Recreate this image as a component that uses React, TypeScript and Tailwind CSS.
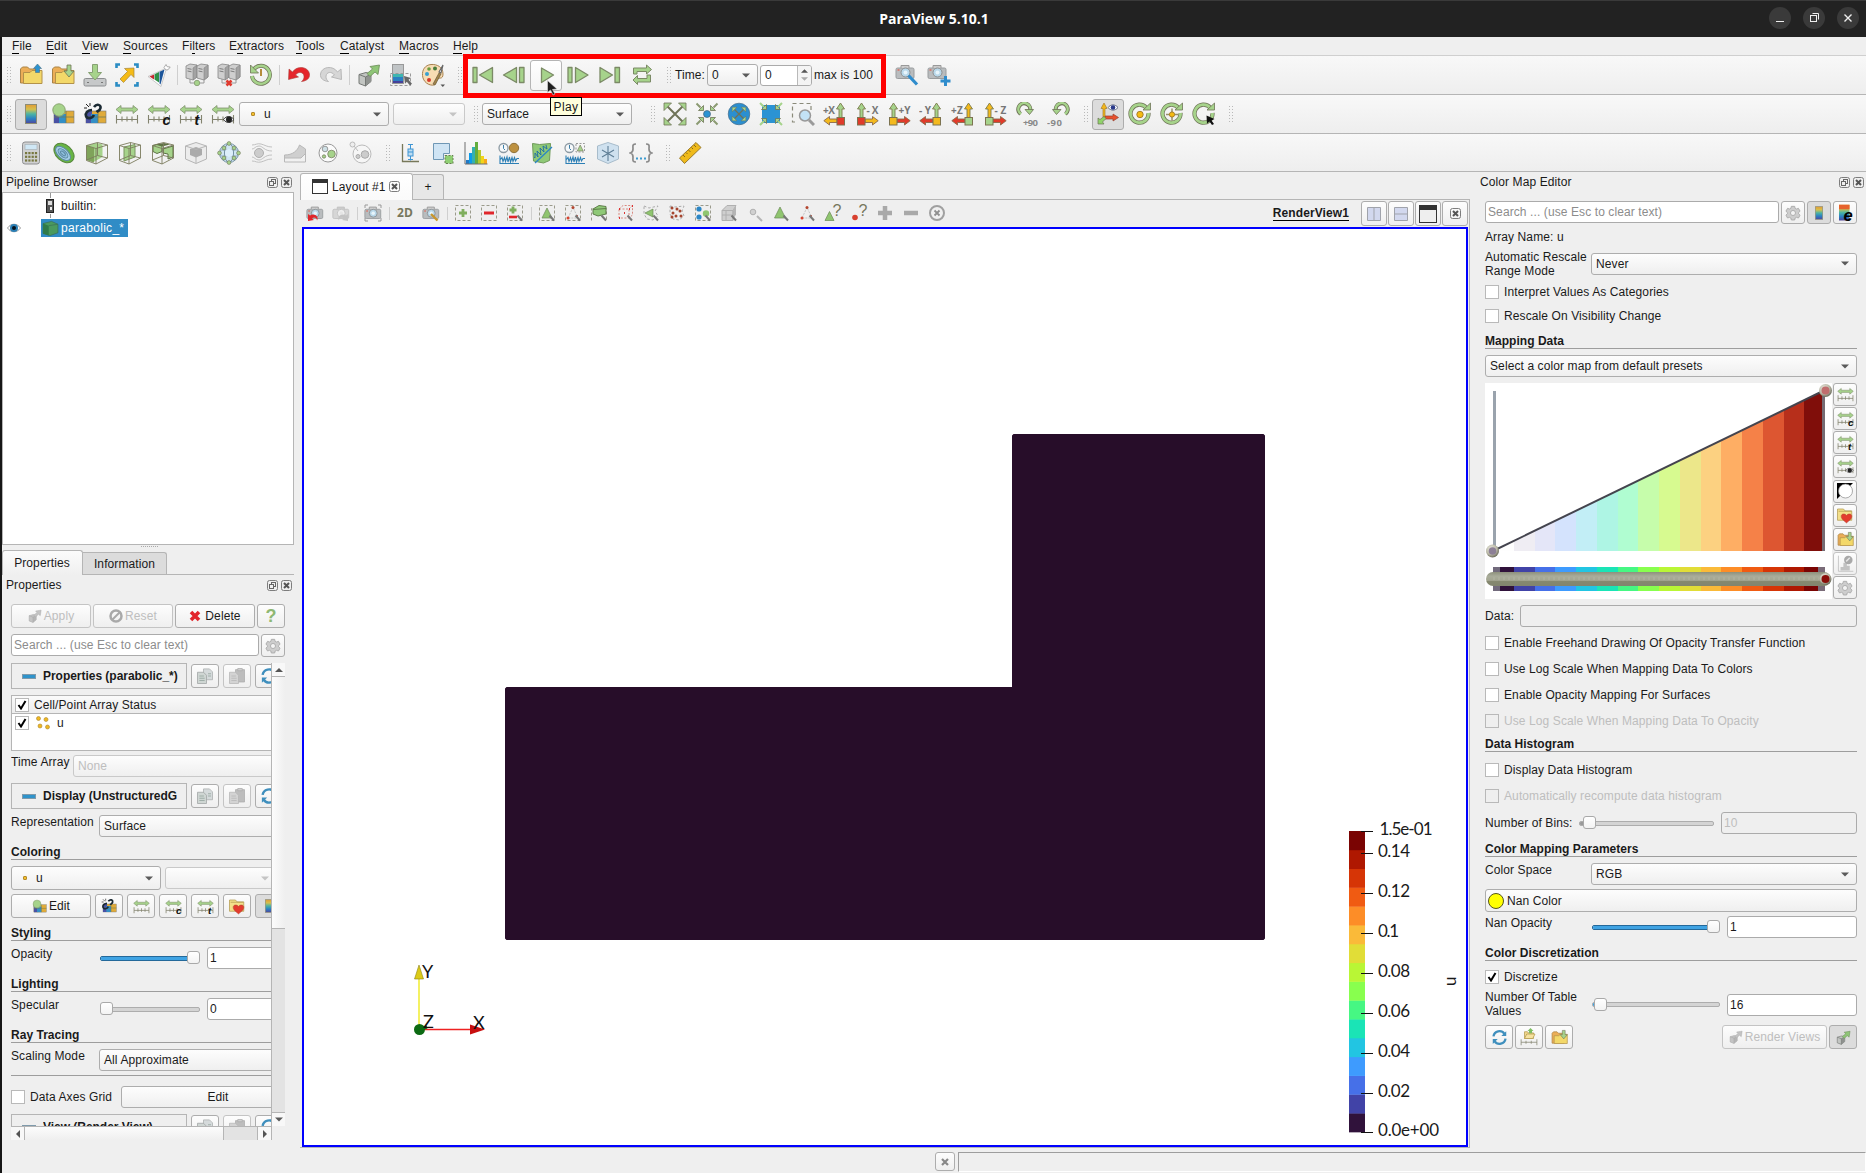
import React from "react";

type Kids = { children?: React.ReactNode };

const G = "#a6d38b";
const GS = "#6f7357";
const TURBO = ["#30123b", "#4143a7", "#4670e8", "#3e9bfe", "#22c5e2", "#1ae4b6", "#46f783", "#88ff4e", "#b9f635", "#e1dd37", "#faba39", "#fd8d27", "#f05b12", "#d63506", "#af1801", "#7a0403"];

/* ---------- icon primitives ---------- */
const Ic = ({ s = 24, children }: Kids & { s?: number }) => (
  <svg width={s} height={s} viewBox="0 0 24 24" fill="none" className="shrink-0">{children}</svg>
);
const Sm = ({ children }: Kids) => (
  <svg width={18} height={18} viewBox="0 0 18 18" fill="none" className="shrink-0">{children}</svg>
);

const FolderBody = () => (
  <>
    <path d="M1.500 20V6l2-2h5l2 2h8v14z" fill="#ecae57" stroke="#a98346" />
    <path d="M4.500 20.500v-11h6.500l2-2h10v13z" fill="#f3d869" stroke="#b3924a" />
  </>
);
const FolderUp = () => (<Ic><FolderBody /><path d="M18.500 1l4 4.500h-2v4h-4v-4h-2z" fill="#2b93cf" stroke="#4b6f85" strokeWidth=".6" /></Ic>);
const FolderDown = ({ s = 24 }: { s?: number }) => (<Ic s={s}><FolderBody /><path d="M16 2h4v6h3l-5 6-5-6h3z" fill={G} stroke={GS} strokeWidth=".8" /></Ic>);
const SaveData = () => (
  <Ic>
    <rect x="1" y="15.500" width="22" height="7.500" rx="1.500" fill="#c6c8c9" stroke="#8b8d8f" />
    <path d="M9.500 1.500h5v8h4L12 17 5.500 9.500h4z" fill={G} stroke="#86a173" />
    <path d="M4 19.500h2M18 19.500h2" stroke="#777" />
  </Ic>
);
const SaveShot = () => (
  <Ic>
    <path d="M1.500 5V1.500H5M19 1.500h3.500V5M22.500 19v3.500H19M5 22.500H1.500V19" stroke="#2a8cc4" strokeWidth="2.600" />
    <path d="M19 5v9.500l-3-3-7.500 8-3.500-3.500 7.500-7.500-3-3z" fill="#f5bb16" stroke="#a5853a" strokeWidth=".7" />
  </Ic>
);
const CatalystLogo = () => (
  <Ic>
    <path d="M1 13.500L19.500 5 14 23.500z" fill="#fff" stroke="#b5b5b5" strokeWidth=".7" />
    <path d="M2.500 13.500l4.500-2v5z" fill="#c42630" /><path d="M7.500 11.200l4.500-2.200v10.500l-4.500-3z" fill="#2d8f47" /><path d="M12.500 8.800l5-2.300-4 15-1-1z" fill="#1c559a" />
    <path d="M17 4.500l2-3 1.200 2.200 3 .3-2.200 2.800-2 .200z" fill="#fff" stroke="#999" strokeWidth=".8" />
  </Ic>
);
const Tower = ({ x }: { x: number }) => (
  <g transform={`translate(${x} 0)`}>
    <path d="M0 3l4-2 7 1v12l-4 3-7-2z" fill="#cfcfcf" stroke="#858585" strokeWidth=".8" />
    <path d="M7 5l4-3v12l-4 3z" fill="#a3a3a3" stroke="#858585" strokeWidth=".6" />
    <path d="M1.500 5.500l4 .800M1.500 8l4 .800" stroke="#7e7e7e" />
  </g>
);
const Servers = ({ off }: { off?: boolean }) => (
  <Ic>
    <Tower x={1} /><Tower x={12} />
    <path d="M5 16v4h14v-4" stroke="#999" />
    {off ? <path d="M9.500 17.500l5 5M14.500 17.500l-5 5" stroke="#e03a2f" strokeWidth="2.600" /> : <circle cx="12" cy="20" r="2.700" fill={G} stroke="#8fa77c" />}
  </Ic>
);
const History = () => (
  <Ic>
    <path d="M5 6a9 9 0 1 1-2 7" stroke={GS} strokeWidth="4" /><path d="M5 6a9 9 0 1 1-2 7" stroke={G} strokeWidth="2.600" />
    <path d="M1.500 2v8h8z" fill={G} stroke={GS} strokeWidth=".8" /><path d="M12 6v7" stroke="#b58c3c" strokeWidth="2" />
  </Ic>
);
const Undo = () => (<Ic><path d="M2 6l-.500 10.500 10-2.500-3-2c3-4 8-3 8.500 1 .300 3-1 4-2.500 5.500 5-.500 8.500-3 8-7.500C21.500 3.500 10 2 5.500 9z" fill="#e5252b" stroke="#a8433e" strokeWidth=".6" /></Ic>);
const Redo = () => (<Ic><path d="M22 6l.500 10.500-10-2.500 3-2c-3-4-8-3-8.500 1-.300 3 1 4 2.500 5.500-5-.500-8.500-3-8-7.500C2.500 3.500 14 2 18.500 9z" fill="#d6d6d6" stroke="#b8b8b8" /></Ic>);
const ApplyIcon = ({ s = 24, gray }: { s?: number; gray?: boolean }) => (
  <Ic s={s}>
    <path d="M2 11.500l7-2 5 1.500v7.500l-5.500 4.500L2 20.500z" fill={gray ? "#c4c4c4" : "#c2c5c2"} stroke={gray ? "#aaa" : "#757875"} />
    <path d="M8.500 14l5.500-3v7.500L8.500 23z" fill={gray ? "#b5b5b5" : "#8f928f"} /><path d="M2 11.500l6.500 2.500 5.500-3M8.500 14v9" stroke={gray ? "#aaa" : "#757875"} />
    <path d="M13 3.500l9.500-1.500-1.500 9.500-3-2.500-5 4.500-3-3 5.500-4.500z" fill={gray ? "#c4c4c4" : "#8fc577"} stroke={gray ? "#aaa" : "#6b8a58"} strokeWidth=".8" />
  </Ic>
);
const Rainbow = ({ id }: { id: string }) => (
  <defs><linearGradient id={id} x1="0" y1="0" x2="0" y2="1"><stop offset="0" stopColor="#e29b35" /><stop offset=".25" stopColor="#d6c04c" /><stop offset=".5" stopColor="#4bb4a4" /><stop offset=".75" stopColor="#2a7fc4" /><stop offset="1" stopColor="#51469b" /></linearGradient></defs>
);
const ColorBarIcon = ({ s = 24 }: { s?: number }) => (<Ic s={s}><Rainbow id="cb" /><rect x="6.500" y="2.500" width="11" height="19" fill="url(#cb)" stroke="#8d8d75" /></Ic>);
const ColorBarE = () => (<Ic s={18}><rect x="4" y="1" width="14" height="21" fill="url(#cb)" /><rect x="4" y="1" width="14" height="6" fill="#e7632c" /><text x="10" y="22.500" fontSize="22" fontWeight="700" fontStyle="italic" fontFamily="Liberation Sans, sans-serif" fill="#000">e</text></Ic>);
const SelLut = () => (
  <Ic>
    <rect x="3.500" y="1.500" width="11" height="19" fill="#c0c4c6" stroke="#999" /><path d="M4 11h10v9H4z" fill="#2b7fc2" /><path d="M4 11h10v3H4z" fill="#3fb6b0" /><path d="M4 18h10v2H4z" fill="#45409a" />
    <path d="M1.500 10.500h20v12h-20z" stroke="#999" strokeDasharray="3 2" /><path d="M15 13l7 2-2.500 1.800 3.500 4-2 1.700-3.200-3.800-1.800 2z" fill="#666" />
  </Ic>
);
const Palette = () => (
  <Ic>
    <path d="M10 1.500C4 2 1 7 1.500 12.500 2 19 8 23 13 22c3-1 1-4 3-6s6 1 6-5C22 4 16 1 10 1.500z" fill="#f7dcb4" stroke="#a8824f" />
    <circle cx="8" cy="6" r="1.800" fill="#6c9c3d" /><circle cx="14" cy="5.500" r="2" fill="#4a7d3b" /><circle cx="6" cy="11" r="2" fill="#39a0cf" /><circle cx="8" cy="17" r="2" fill="#d43a2c" />
    <path d="M22 2l-2 8-2-1z" fill="#fff" stroke="#666" strokeWidth="1.200" /><path d="M18 10l2 1-6 11-2-1z" fill="#a3854c" stroke="#6a5a3a" strokeWidth=".7" />
    <path d="M19.500 21.500h4.500l-2.200 2.500z" fill="#555" />
  </Ic>
);
/* playback */
const vst = { fill: G, stroke: "#7b8a66", strokeWidth: 1.300, strokeLinejoin: "round" as const };
const First = () => (<Ic><path d="M3 4.500h4v15H3zM22.500 4.500v15L9.500 12z" {...vst} /></Ic>);
const Prev = () => (<Ic><path d="M14.500 4.500v15L1.500 12zM17.500 4.500h4.500v15h-4.500z" {...vst} /></Ic>);
const Play = () => (<Ic><path d="M7.500 5v14.500L19.500 12z" {...vst} /></Ic>);
const Next = () => (<Ic><path d="M2 4.500h4v15H2zM9.500 4.500v15L22 12z" {...vst} /></Ic>);
const Last = () => (<Ic><path d="M2 4.500v15L14.500 12zM17 4.500h4.500v15H17z" {...vst} /></Ic>);
const Loop = () => (<Ic><path d="M3.500 11V5h13V2l5 4.500-5 4.500V8.500H7V11zM20.500 12v7h-13v2.500l-4.500-4.500 4.500-4.500V15.500H17V12z" {...vst} strokeWidth={1} /></Ic>);
/* range */
const Range = ({ s = 24, t }: { s?: number; t?: string }) => (
  <Ic s={s}>
    <path d="M1 7.500l5-4v2.500h12V3.500l5 4-5 4V9H6v2.500z" fill={G} stroke="#82936e" strokeWidth=".8" />
    <path d="M1.500 13v8.500M1.500 17.500h21M22.500 13v8.500M7 14.500v5M12 14.500v5M17 14.500v5" stroke="#83836f" strokeWidth="1.100" />
    {t === "eye" ? (<><path d="M12.500 17.500c3-4 7-4 10.500 0-3.500 4-7.500 4-10.500 0z" fill="#eee" stroke="#333" /><circle cx="18" cy="17.500" r="3" fill="#222" /></>) : t ? (
      <text x="15.500" y="22.500" fontSize="14" fontWeight="700" fontStyle="italic" fontFamily="Liberation Sans, sans-serif" fill="#111">{t}</text>) : null}
  </Ic>
);
const LutBlob = () => (<><rect x="3" y="9" width="20" height="12" fill="#e0ab3a" stroke="#777" strokeWidth=".6" /><path d="M3 9h6v12H3z" fill="#4a51a4" /><path d="M8 12h7v9H8z" fill="#338fc6" /><path d="M15 9v12M3 15h20" stroke="#6f7a55" strokeWidth=".8" /></>);
const EditMap = ({ s = 24 }: { s?: number }) => (<Ic s={s}><LutBlob /><circle cx="8" cy="8" r="6.200" fill={G} stroke="#8aa571" /></Ic>);
const SepMap = ({ s = 24 }: { s?: number }) => (<Ic s={s}><LutBlob /><path d="M11 5c3-4 7-2 6.500 1s-3 3-4 4M9 8c-4 0-7 3-6 6s6 3 8-1" stroke="#1b2a33" strokeWidth="2.600" /><path d="M3 2l3 3M7 1v3M1 6h3" stroke="#222" /></Ic>);
/* camera */
const InArrows = () => (<g fill={G} stroke={GS} strokeWidth=".8"><path d="M8.500 8.500V3.500L3.500 8.500zM15.500 8.500V3.500l5 5zM8.500 15.500v5l-5-5zM15.500 15.500v5l5-5z" /><path d="M1.500 1.500l4 4M22.500 1.500l-4 4M1.500 22.500l4-4M22.500 22.500l-4-4" stroke="#8b9a72" strokeWidth="2" /></g>);
const OutArrows = ({ k = 1 }: { k?: number }) => (<g transform={`translate(12 12) scale(${k}) translate(-12 -12)`}><path d="M4 4l16 16M20 4L4 20" stroke={GS} strokeWidth="2" /><path d="M1 1h7.500L1 8.500zM23 1v7.500L15.500 1zM1 23v-7.500L8.500 23zM23 23h-7.500l7.500-7.500z" fill={G} stroke={GS} strokeWidth=".8" /></g>);
const ResetCam = () => <Ic><OutArrows /></Ic>;
const ZoomData = () => <Ic><InArrows /><circle cx="12" cy="12" r="3.500" fill="#2b93d3" stroke="#456" strokeWidth=".6" /></Ic>;
const ResetClosest = () => <Ic><circle cx="12" cy="12" r="10.800" fill="#2b8fd0" stroke="#4c6f88" strokeWidth=".7" /><OutArrows k={0.62} /></Ic>;
const ZoomClosest = () => <Ic><rect x="3" y="3" width="18" height="18" fill="#2b93d3" /><g fill={G} stroke={GS} strokeWidth=".8"><path d="M7.500 7.500V2.500L2.500 7.500zM16.500 7.500v-5l5 5zM7.500 16.500v5l-5-5zM16.500 16.500v5l5-5z" /><path d="M1 1l4 4M23 1l-4 4M1 23l4-4M23 23l-4-4" stroke={G} strokeWidth="2" /></g></Ic>;
const ZoomBox = () => <Ic><path d="M20 8V1.500H1.500V20H6" stroke="#8a8a7a" strokeDasharray="4 3" strokeWidth="1.200" /><path d="M18 18l5 5" stroke="#9a9a9a" strokeWidth="3" /><circle cx="14" cy="13.500" r="5.500" fill="#c3e2f5" stroke="#999" strokeWidth="1.500" /></Ic>;
const AxisIc = ({ t, flip, up, side, box }: { t: string; flip?: boolean; up: string; side: string; box: string }) => (
  <Ic>
    <g transform={flip ? "translate(24 0) scale(-1 1)" : undefined}>
      <path d="M16 16V7h-2.500l4-6 4 6H19v9z" fill={up} stroke="#7c7a4c" strokeWidth=".9" />
      <path d="M14 17H6.500V14.500L.800 18.700 6.500 23v-2.500H14z" fill={side} stroke="#8a6a4c" strokeWidth=".9" />
      <rect x="14" y="15.500" width="7.500" height="7.500" fill={box} stroke="#7c7350" />
    </g>
    <text x={flip ? 11.500 : 0} y="12" fontSize="10" fontWeight="700" fontFamily="Open Sans, sans-serif" fill="#777" textLength="12">{t}</text>
  </Ic>
);
const Rot = ({ t, flip }: { t: string; flip?: boolean }) => (
  <Ic><g transform={flip ? "translate(24 0) scale(-1 1)" : undefined}><path d="M5.500 12a6 6 0 1 1 9.500-3" stroke={GS} strokeWidth="4" /><path d="M6 12a6 6 0 1 1 9-3" stroke={G} strokeWidth="2.400" /><path d="M10 7.500h8.500l-4 5z" fill={G} stroke={GS} strokeWidth=".8" /></g>
    <text x={flip ? 0 : 8} y="23.500" fontSize="9.500" fontWeight="700" fontFamily="Open Sans, sans-serif" fill="#8a8a8a" textLength="15">{t}</text></Ic>
);
const AxesVis = () => <Ic><path d="M7 15V6.500H5L8 1l3 5.500H9V15z" fill="#f3b71a" stroke="#a8802c" strokeWidth=".7" /><path d="M9 14h8v-2l5.500 3.500-5.500 3.500v-2H9z" fill="#e8502c" stroke="#96402f" strokeWidth=".7" /><path d="M8 14.500l2 2-3.500 3.500 1.500 2H2v-6l2 1.500z" fill="#8fd36a" stroke={GS} strokeWidth=".7" /><path d="M12 5.500c3-3.500 7-3.500 10 0-3 3.500-7 3.500-10 0z" fill="#fff" stroke="#666f86" /><circle cx="17" cy="5.500" r="2.300" fill="#2b3a8a" /></Ic>;
const Center = ({ k }: { k: number }) => <Ic><path d="M18.500 6a9 9 0 1 0 2 5" stroke={GS} strokeWidth="4.200" /><path d="M18.500 6a9 9 0 1 0 2 5" stroke={G} strokeWidth="2.800" /><path d="M15 8h7.500V1z" fill={G} stroke={GS} strokeWidth=".8" />{k === 0 && <circle cx="12" cy="12.500" r="3.200" fill="#f6bb12" stroke="#a8802c" />}{k === 1 && <><path d="M12 6.500v12M6 12.500h12" stroke="#97906a" strokeWidth="1.500" /><circle cx="12" cy="12.500" r="2.600" fill="#f6bb12" stroke="#a8802c" /></>}{k === 2 && <path d="M14.500 13.500l8 3.500-3 1.500L22 22l-2 1-2.500-3.500L15 21.500z" fill="#111" />}</Ic>;
/* filters */
const Calc = () => <Ic><rect x="3.500" y="1" width="17" height="22" rx="2.500" fill="#cfd0d1" stroke="#8f9092" /><rect x="6" y="3.500" width="12" height="5" fill="#cfe7f5" stroke="#a8b3b8" strokeWidth=".7" />{[0, 1, 2].map(r => [0, 1, 2, 3].map(c => <rect key={`${r}${c}`} x={6 + c * 3.300} y={11 + r * 3.700} width="2.200" height="2.200" fill="#77773f" />))}</Ic>;
const Contour = () => <Ic><ellipse cx="12" cy="12" rx="11.500" ry="8" transform="rotate(42 12 12)" fill="#68b545" stroke="#57873d" /><ellipse cx="11.500" cy="13" rx="9" ry="5" transform="rotate(42 12 12)" fill="#a6cfe8" stroke="#5d8aa3" /><ellipse cx="11.500" cy="13" rx="6" ry="3" transform="rotate(42 12 12)" stroke="#5d8aa3" fill="#8fbfdd" /><ellipse cx="11.500" cy="13" rx="3" ry="1.400" transform="rotate(42 12 12)" stroke="#5d8aa3" /></Ic>;
const Frame = ({ c = "#7c7c5e" }: { c?: string }) => <path d="M1.500 4.500l11-3 10 2.500v13l-11.500 6-9.500-3.500zM1.500 4.500l9.500 3 11.500-3.500M11 7.500V23M12.500 1.500v13l-11 4.500M12.500 14.500l10 2.500" stroke={c} strokeWidth=".9" />;
const Clip = () => <Ic><path d="M1.500 4.500l10-2.500 6 1.500v12.500L8.500 21l-7-2z" fill={G} /><path d="M1.500 4.500L9 7v14.500l-7.500-2.500z" fill="#7fa35a" /><Frame /></Ic>;
const Slice = () => <Ic><path d="M6 6l11-2.500V16L6 20z" fill={G} stroke="#7b9660" /><Frame /></Ic>;
const Thresh = () => <Ic><path d="M2 4.500l6-1.500 3 1.500v6l-5 2-4-2zM12 8l10-3v11l-5 2v-5l-5-1z" fill={G} stroke="#5d7345" /><path d="M4 3.500l7 2 8-2-6-1.500z" fill="#5f7345" /><Frame /></Ic>;
const Extract = () => <Ic><path d="M1.500 5l10.500-3.500L22.500 5v13L12 22.500 1.500 18z" fill="#ececec" stroke="#b5b5b5" /><path d="M6 8l6-2 6 2v6l-6 2.500L6 14z" fill="#ababab" /><path d="M1.500 5L12 8.500l10.500-3.500M12 16v6" stroke="#b5b5b5" /></Ic>;
const Glyph = () => <Ic><circle cx="12" cy="12" r="9.500" fill="#cfe5f3" stroke="#7b98a8" /><ellipse cx="12" cy="12" rx="4.500" ry="9.500" stroke="#6f8d9d" /><path d="M3 9h18M3 15h18" stroke="#7d9db0" strokeWidth=".8" /><circle cx="12" cy="12" r="4" fill="#dceefa" />{[[12, 2.500], [12, 21.500], [2.500, 12], [21.500, 12], [7, 7], [17, 7], [7, 17], [17, 17]].map(([x, y]) => <circle key={`${x}-${y}`} cx={x} cy={y} r="1.900" fill={G} stroke={GS} strokeWidth=".6" />)}</Ic>;
const Stream = () => <Ic><circle cx="9" cy="12" r="4.500" fill="#ccc" stroke="#b0b0b0" /><path d="M2 4c4 0 5-2 9-1s6 3 11 3M2 20c4 0 5 2 9 1s6-3 11-3M2 8c3 0 3-3 7-3s5 5 13 5M2 16c3 0 3 3 7 3s5-5 13-5" stroke="#bbb" strokeWidth=".9" /></Ic>;
const Warp = () => <Ic><path d="M1.500 14c8 0 13-4 15-10l6 4v4.500L18 17H1.500z" fill="#cfcfcf" stroke="#b8b8b8" /><path d="M1.500 14v7h21V12" stroke="#b8b8b8" /></Ic>;
const Group = () => <Ic><circle cx="12" cy="12" r="9" fill="#fbfbfb" stroke="#999" /><circle cx="9" cy="8" r="2.800" fill="#cfe0e5" stroke="#777" strokeWidth=".7" /><circle cx="15.500" cy="13" r="3.800" fill={G} stroke={GS} strokeWidth=".7" /><circle cx="8" cy="15.500" r="1.700" fill={G} stroke={GS} strokeWidth=".7" /></Ic>;
const ExGroup = () => <Ic><circle cx="13" cy="13" r="9" fill="#f6f6f6" stroke="#bbb" /><circle cx="16" cy="13.500" r="3.800" fill="#ccc" stroke="#aaa" /><circle cx="9" cy="15.500" r="2" fill="#ccc" stroke="#aaa" /><circle cx="3.500" cy="3.500" r="2.500" fill="#eee" stroke="#bbb" /><path d="M5 5l4 5" stroke="#bbb" /></Ic>;
const BoxPlot = () => <Ic><path d="M4.500 3v17.500H21" stroke="#77785a" strokeWidth="1.300" /><path d="M12.500 3.500v16M10 3.500h5M10 18.500h5" stroke="#3f95d3" /><rect x="10" y="8" width="5" height="7" fill="#bcdcf2" stroke="#3f95d3" /><path d="M10 11h5" stroke="#3f95d3" /></Ic>;
const ExSel = () => <Ic><path d="M2.500 2.500h16v10h-6v6h-10z" fill="#cfe4f4" stroke="#6f97b5" /><rect x="14" y="14.500" width="8" height="8" fill="#8fcf73" stroke="#667c50" strokeDasharray="2 1.500" /></Ic>;
const Histo = () => <Ic>{["#2479c4", "#0b9bea", "#35b0b0", "#63ad3d", "#b5c92f", "#f3d419", "#f7a81c"].map((c, i) => <rect key={c} x={2 + i * 3} y={[19, 12, 6, 1, 9, 15, 18][i]} width="3" height={23 - [19, 12, 6, 1, 9, 15, 18][i]} fill={c} />)}<path d="M1 1v22h22.500" stroke="#6f6f6f" /></Ic>;
const Wave = () => <path d="M3 14.500v8h19M3.500 18.500l1.500-2 1 4 1.500-4 1 4 1.500-4.500 1 5 1.500-5 1 5 1.500-4.500 1 4 1.500-4 1 3.500 1.500-2.500h2" stroke="#2c7fb5" strokeWidth="1.100" />;
const TimeA = ({ k }: { k?: boolean }) => <Ic><circle cx="6.500" cy="7" r="4.500" fill="#f5f8fa" stroke="#8d9aa3" strokeWidth="1.300" /><path d="M6.500 4v3.500L8 9" stroke="#3d7fa8" />{k ? <><rect x="13" y="2.500" width="8.500" height="8.500" stroke="#999" strokeDasharray="2 1.500" /><path d="M17.200 4l3 6h-6z" fill={G} stroke={GS} strokeWidth=".6" /></> : <circle cx="17" cy="7" r="4.700" fill="#bd9140" stroke="#8f7139" />}<Wave /></Ic>;
const OverLine = () => <Ic><path d="M2.500 2.500l7 1 11-1-1 17-6 2.500-10-2z" fill="#8fc977" stroke="#6f9a5a" /><path d="M5 22L22 6" stroke="#2b86c5" strokeWidth="1.300" /><path d="M4 16l1 1 0-5 3 4-1-6 4 4-1-7 4 4-1-6 4 3-1-4" stroke="#1f6ca6" strokeWidth=".9" /></Ic>;
const Probe = () => <Ic><path d="M1.500 5L12 1.500 22.500 5v13L12 22.500 1.500 18z" fill="#cfe1ef" stroke="#a8bccb" /><path d="M12 5v15M6 9l12 7M18 9L6 16" stroke="#5e7e96" strokeWidth="1.100" /></Ic>;
const Prog = () => <Ic><path d="M7 3c-4 0-3 2-3 5 0 2-1 3.500-2.500 4C3 12.500 4 14 4 16c0 3-1 5 3 5M17 3c4 0 3 2 3 5 0 2 1 3.500 2.500 4-1.500.500-2.500 2-2.500 4 0 3 1 5-3 5" stroke="#8b8b8b" strokeWidth="1.700" /><path d="M7 17.500h2M11 17.500h2M15 17.500h2" stroke="#3d9bd0" strokeWidth="2.200" /></Ic>;
const Ruler = () => <Ic><path d="M1.500 17L18 1.500l5 5L6.500 22.500z" fill="#efba1b" stroke="#9a7a2c" /><path d="M5 14l2 2M8 11.500l1.500 1.500M10.500 9l2 2M13.500 6.500L15 8M16 4l2 2" stroke="#8a6a1c" /></Ic>;
const Camera = ({ gray }: { gray?: boolean }) => (<><rect x="1" y="5" width="18" height="10.500" rx="1.500" fill={gray ? "#d6d6d6" : "#b9bcbe"} stroke={gray ? "#c0c0c0" : "#999c9e"} /><path d="M6 5V2.500h8V5" fill="#ccc" stroke={gray ? "#c0c0c0" : "#999"} /><circle cx="10.500" cy="9.500" r="4.500" fill={gray ? "#eee" : "#b9d8ea"} stroke={gray ? "#c0c0c0" : "#8c8f91"} /><circle cx="10.500" cy="9.500" r="2" fill={gray ? "#e5e5e5" : "#e7f4fb"} />{!gray && <path d="M2.500 7h2" stroke="#e25a4a" strokeWidth="1.200" />}</>);
const CamWrench = () => <Ic><Camera /><path d="M13.500 12.500l8.500 9" stroke="#2f8ccc" strokeWidth="3.200" /></Ic>;
const CamPlus = () => <Ic><Camera /><path d="M18.500 13v10M13.500 18h10" stroke="#2f8ccc" strokeWidth="3" /></Ic>;

/* small glyphs */
const Gear = ({ s = 16 }: { s?: number }) => <Ic s={s}><path d="M9.500 2h5l.700 3 2 1 3-1 2.400 4.300-2.300 2.200v1.500l2.300 2.200-2.400 4.300-3-1-2 1-.700 3h-5l-.700-3-2-1-3 1-2.400-4.300L3.700 13v-1.500L1.400 9.300 3.800 5l3 1 2-1z" fill="#cdcdcd" stroke="#a8a8a8" strokeWidth="1.300" /><circle cx="12" cy="12" r="3.800" fill="#f3f3f3" stroke="#a8a8a8" strokeWidth="1.300" /></Ic>;
const Refresh = ({ s = 18 }: { s?: number }) => <Ic s={s}><path d="M3.500 10.500a8.500 8.500 0 0 1 15.500-3.500M20.500 13.500a8.500 8.500 0 0 1-15.500 3.500" stroke="#3f8fbd" strokeWidth="3.200" /><path d="M21.500 3v7h-7zM2.500 21v-7h7z" fill="#3f8fbd" /></Ic>;
const Copy = ({ k }: { k?: boolean }) => <Ic s={18}>{k ? <><path d="M10 3.500h12V20H10z" fill="#bdbdbd" stroke="#acacac" /><path d="M13 2h6v3h-6z" fill="#cfcfcf" stroke="#acacac" /></> : <path d="M10 2.500h8l4 4V17H10z" fill="#d5dadb" stroke="#a9adad" />}<path d="M2 7h8l4 4v11H2z" fill={k ? "#d3d3d3" : "#cfd6d3"} stroke={k ? "#b5b5b5" : "#9fa3a3"} /><path d="M4.500 12h6M4.500 15h7M4.500 18h7" stroke={k ? "#b5b5b5" : "#8fa09a"} />{!k && <path d="M16 9h4M16 12h4" stroke="#8fa09a" />}</Ic>;
const Heart = () => <Ic s={18}><path d="M2 19V4h8l2 2.500h9V19z" fill="#f4e08a" stroke="#b39b52" /><path d="M3.500 7h17" stroke="#b39b52" /><path d="M14 22.500c-5-4-7.500-6-7-9.500.500-3 5-3 7-.500 2-2.500 6.500-2.500 7 .500.500 3.500-2 5.500-7 9.500z" fill="#e33b2e" stroke="#b0452f" strokeWidth=".7" /></Ic>;
const FloatX = () => (
  <span className="flex gap-[3px]">
    <svg width="11" height="11" viewBox="0 0 11 11" fill="none"><rect x=".5" y=".5" width="10" height="10" rx="2" stroke="#7d7d7d" /><rect x="4.500" y="2.500" width="4" height="4" stroke="#666" /><rect x="2.500" y="4.500" width="4" height="4" fill="#efefef" stroke="#666" /></svg>
    <XBox />
  </span>
);
const XBox = () => <svg width="11" height="11" viewBox="0 0 11 11" fill="none" className="shrink-0"><rect x=".5" y=".5" width="10" height="10" rx="2" stroke="#7d7d7d" /><path d="M3 3l5 5M8 3L3 8" stroke="#555" strokeWidth="2" /></svg>;

/* view-toolbar icons */
const Dash = () => <rect x="1.500" y="1.500" width="15" height="15" stroke="#9b9b8c" strokeDasharray="3 2" />;
const Wand = () => <path d="M11.500 11.500l4.500 5" stroke="#777" strokeWidth="2" />;
const CamSm = ({ gray }: { gray?: boolean }) => <g transform="scale(.88) translate(0 1)"><Camera gray={gray} /></g>;
const PlusG = ({ x = 9, y = 9, r = 4 }: { x?: number; y?: number; r?: number }) => <path d={`M${x} ${y - r}v${2 * r}M${x - r} ${y}h${2 * r}`} stroke="#7fae5e" strokeWidth="2.800" />;
const Tri = ({ x = 9, y = 9, r = 5 }: { x?: number; y?: number; r?: number }) => <path d={`M${x} ${y - r}l${r} ${2 * r}h${-2 * r}z`} fill="#8fc56f" stroke="#6c8a57" strokeWidth=".7" />;
const Pts = () => <><path d="M9 3.500L4 14h10z" stroke="#c4c4c4" strokeDasharray="2 1" /><circle cx="9" cy="3.500" r="1.500" fill="#b3452f" /><circle cx="4" cy="14" r="1.500" fill="#d8432f" /><circle cx="13" cy="12" r="1" fill="#b3452f" /></>;
const Q = () => <text x="8.500" y="12" fontSize="16" fontFamily="Liberation Sans, sans-serif" fill="#77775c">?</text>;

const VSep = () => <span className="ml-[3px] mr-[2px] h-[13px] w-px shrink-0 bg-[#cfcfcf]" />;
const VCell = ({ children }: Kids) => <span className="flex w-[26px] shrink-0 items-center justify-center">{children}</span>;

/* ---------- widgets ---------- */
const Handle = ({ c = "" }: { c?: string }) => (
  <svg width="5" height="18" viewBox="0 0 5 18" className={`shrink-0 ${c}`}>
    {[0, 1, 2, 3, 4, 5].map(i => <g key={i} fill="#b9b9b9"><rect x="0" y={i * 3 + 1} width="1" height="1" /><rect x="3" y={i * 3 + 1} width="1" height="1" /></g>)}
  </svg>
);
const Cell = ({ children }: Kids) => <span className="flex h-[32px] w-[32px] shrink-0 items-center justify-center">{children}</span>;
const Cell33 = ({ children }: Kids) => <span className="flex h-[32px] w-[33px] shrink-0 items-center justify-center">{children}</span>;
const Pressed = ({ children }: Kids) => <span className="flex h-[31px] w-[32px] shrink-0 items-center justify-center rounded-[3px] border border-[#adadad] bg-[#dcdcdc]">{children}</span>;
const Sep = () => <span className="mx-[2px] h-[20px] w-[2px] shrink-0 border-l border-[#cfcfcf]" />;
const Arrow = ({ dis }: { dis?: boolean }) => <svg width="8" height="5" viewBox="0 0 8 5" className="shrink-0"><path d="M0 .500h8L4 4.500z" fill={dis ? "#c4c4c4" : "#5a5a5a"} /></svg>;
const Combo = ({ c, children, dis, noArrow }: Kids & { c: string; dis?: boolean; noArrow?: boolean }) => (
  <span className={`flex shrink-0 items-center justify-between rounded-[3px] border bg-gradient-to-b from-[#fdfdfd] to-[#efefef] pl-[4px] pr-[7px] ${dis ? "border-[#c9c9c9] text-[#bebebe]" : "border-[#adadad]"} ${c}`}>
    <span className="flex items-center">{children}</span>{!noArrow && <Arrow dis={dis} />}
  </span>
);
const Btn = ({ c, children, dis, on }: Kids & { c: string; dis?: boolean; on?: boolean }) => (
  <span className={`flex shrink-0 items-center justify-center rounded-[3px] border ${on ? "bg-[#dcdcdc]" : "bg-gradient-to-b from-[#fdfdfd] to-[#efefef]"} ${dis ? "border-[#c4c4c4] text-[#bebebe]" : "border-[#adadad]"} ${c}`}>{children}</span>
);
const Input = ({ c, children, dis }: Kids & { c: string; dis?: boolean }) => (
  <span className={`flex shrink-0 items-center rounded-[3px] border border-[#ababab] pl-[2px] ${dis ? "bg-[#efefef] text-[#bebebe]" : "bg-white"} ${c}`}>{children}</span>
);
const Check = ({ on, dis }: { on?: boolean; dis?: boolean }) => (
  <span className={`flex h-[14px] w-[14px] shrink-0 items-center justify-center border border-[#b9b9b9] ${dis ? "bg-[#efefef]" : "bg-white"}`}>
    {on && <svg width="10" height="10" viewBox="0 0 10 10" fill="none"><path d="M1.500 5l2.500 3.500L8.500 1" stroke="#000" strokeWidth="2" /></svg>}
  </span>
);
const CheckRow = ({ c, t, dis, on }: { c: string; t: string; dis?: boolean; on?: boolean }) => (
  <div className={`flex h-[14px] shrink-0 items-center gap-[5px] ${dis ? "text-[#bebebe]" : ""} ${c}`}><Check dis={dis} on={on} /><span className="whitespace-nowrap leading-[14px]">{t}</span></div>
);
const Section = ({ c, t }: { c: string; t: string }) => (
  <div className={`h-[15px] shrink-0 whitespace-nowrap border-b border-[#9d9d9d] font-bold leading-[14px] tracking-[0.03px] ${c}`}>{t}</div>
);
const Slider = ({ c, pos, dis }: { c: string; pos: number; dis?: boolean }) => (
  <span className={`relative flex h-[22px] shrink-0 items-center ${c}`}>
    <span className={`flex h-[5px] w-full overflow-hidden rounded-[2px] border bg-[#d4d4d4] ${pos > 50 ? "border-[#24699a]" : "border-[#adadad]"}`}>
      <span className={dis ? "bg-[#9a9a9a]" : "bg-[#3fa3e3]"} style={{ width: pos + 4 }} />
    </span>
    <span className="absolute top-[4px] h-[13px] w-[13px] rounded-[3px] border border-[#a9a9a9] bg-gradient-to-b from-white to-[#f3f3f3]" style={{ left: pos }} />
  </span>
);
const GroupHead = ({ c, t }: { c: string; t: string }) => (
  <div className={`flex h-[26px] shrink-0 items-center gap-[4px] ${c}`}>
    <span className="flex h-[26px] w-[176px] shrink-0 items-center border border-[#b5b5b5] pl-[10px] pr-[8px]">
      <span className="h-[5px] w-[14px] shrink-0 border border-[#7f9aab] bg-[#2f93cb]" />
      <span className="ml-[7px] overflow-hidden whitespace-nowrap font-bold tracking-[-0.03px]">{t}</span>
    </span>
    <Btn c="h-[24px] w-[28px]"><Copy /></Btn>
    <Btn c="h-[24px] w-[28px]" dis><Copy k /></Btn>
    <Btn c="h-[24px] w-[28px]"><Refresh /></Btn>
  </div>
);
const DockTitle = ({ t, c }: { t: string; c: string }) => (
  <div className={`flex h-[20px] shrink-0 items-center justify-between pt-px ${c}`}><span className="leading-[15px]">{t}</span><FloatX /></div>
);

const MENU: [string, string, string, string][] = [
  ["", "F", "ile", "w-[34px]"], ["", "E", "dit", "w-[36px]"], ["", "V", "iew", "w-[41px]"], ["", "S", "ources", "w-[59px]"], ["Fi", "l", "ters", "w-[47px]"],
  ["E", "x", "tractors", "w-[67px]"], ["", "T", "ools", "w-[44px]"], ["", "C", "atalyst", "w-[59px]"], ["", "M", "acros", "w-[54px]"], ["", "H", "elp", "w-[40px]"],
];

function LeftDock() {
  return (
    <div className="flex w-[297px] shrink-0 flex-col">
      <DockTitle t="Pipeline Browser" c="pl-[4px] pr-[7px]" />
      <div className="h-[353px] w-[292px] shrink-0 border border-[#b5b5b5] bg-white">
        <div className="flex h-[26px] items-center pb-px pl-[43px]">
          <svg width="8" height="25" viewBox="0 0 8 25" fill="none"><path d="M4.500 0v5M4.500 21v4" stroke="#999" /><rect x=".5" y="6.500" width="7" height="13" fill="#555" stroke="#222" /><rect x="2" y="8" width="4" height="4" fill="#ddd" /><rect x="4" y="14" width="2" height="3" fill="#eee" /></svg>
          <span className="ml-[7px]">builtin:</span>
        </div>
        <div className="flex h-[18px] items-center">
          <svg width="14" height="12" viewBox="0 0 14 12" className="ml-[4px] shrink-0" fill="none"><path d="M.500 6C4 1 10 1 13.500 6 10 11 4 11 .500 6z" fill="#fff" stroke="#9a9a9a" /><circle cx="7" cy="6" r="4" fill="#2b7fb5" /><circle cx="7" cy="6" r="2" fill="#06121c" /></svg>
          <span className="ml-[20px] flex h-[18px] w-[87px] items-center bg-[#308cc6] pl-[1px] text-white">
            <svg width="17" height="17" viewBox="0 0 24 24"><path d="M1.500 5l12-3 9 4v12l-11 4-10-3z" fill="#4a9a5e" stroke="#3c6f55" /><path d="M1.500 5l8 3v14l-8-3z" fill="#2f7a4a" /><path d="M9.500 8l13-2" stroke="#3c6f55" /></svg>
            <span className="ml-[2px] tracking-[0.3px]">parabolic_*</span>
          </span>
        </div>
      </div>
      <div className="flex h-[5px] shrink-0 items-start justify-center pr-[3px] pt-px"><span className="w-[17px] border-t border-dotted border-[#aaa]" /></div>
      <div className="flex h-[25px] w-[292px] shrink-0 items-end">
        <span className="flex h-[25px] w-[81px] items-center justify-center rounded-t-[3px] border border-b-0 border-[#b5b5b5] bg-gradient-to-b from-[#fbfbfb] to-[#efefef] pr-px">Properties</span>
        <span className="flex h-[25px] flex-1 items-end border-b border-[#b5b5b5]"><span className="flex h-[22px] w-[84px] items-center justify-center rounded-tr-[3px] border border-b-0 border-l-0 border-[#b5b5b5] bg-[#dcdcdc]">Information</span></span>
      </div>
      <DockTitle t="Properties" c="pl-[4px] pr-[7px]" />
      <div className="mt-[9px] flex h-[24px] shrink-0 gap-[2px] pl-[9px]">
        <Btn c="w-[80px] gap-[2px]" dis><ApplyIcon s={14} gray />Apply</Btn>
        <Btn c="w-[80px] gap-[2px]" dis><svg width="14" height="14" viewBox="0 0 14 14" fill="none"><circle cx="7" cy="7" r="5.500" stroke="#a9a9a9" strokeWidth="2.500" /><path d="M3 11l8-8" stroke="#a9a9a9" strokeWidth="2" /></svg>Reset</Btn>
        <Btn c="w-[80px] gap-[4px]"><svg width="12" height="12" viewBox="0 0 12 12"><path d="M2 2l8 8M10 2l-8 8" stroke="#e2252b" strokeWidth="3.600" /></svg>Delete</Btn>
        <Btn c="w-[28px]"><span className="text-[18px] font-bold leading-[18px] text-[#8fb873]">?</span></Btn>
      </div>
      <div className="mt-[6px] flex h-[23px] shrink-0 gap-[2px] pl-[9px]">
        <Input c="h-[22px] w-[248px] text-[#8c8c8c]">Search ... (use Esc to clear text)</Input>
        <Btn c="w-[24px] h-[23px]"><Gear /></Btn>
      </div>
      <div className="ml-[9px] mt-[6px] flex h-[463px] w-[274px] shrink-0">
        <div className="flex w-[260px] flex-col overflow-hidden">
          <GroupHead c="" t="Properties (parabolic_*)" />
          <div className="mt-[6px] h-[56px] w-[280px] shrink-0 border border-[#b5b5b5] bg-white">
            <div className="flex h-[18px] items-center gap-[5px] border-b border-[#b5b5b5] bg-gradient-to-b from-[#fafafa] to-[#ededed] pl-[3px]"><Check on />Cell/Point Array Status</div>
            <div className="flex h-[18px] items-center pl-[3px]">
              <Check on />
              <svg width="14" height="14" viewBox="0 0 14 14" className="ml-[7px] mr-[7px]" fill="#f0b820" stroke="#a98733" strokeWidth=".6"><circle cx="2.500" cy="2.500" r="2" /><circle cx="10" cy="3.500" r="2" /><circle cx="4" cy="10" r="2" /><circle cx="11.500" cy="11" r="2" /></svg>u
            </div>
          </div>
          <div className="mt-[4px] flex h-[22px] shrink-0"><span className="w-[62px] shrink-0 whitespace-nowrap leading-[14px]">Time Array</span><Combo c="w-[260px]" dis>None</Combo></div>
          <GroupHead c="mt-[6px]" t="Display (UnstructuredG" />
          <div className="mt-[6px] flex h-[22px] shrink-0"><span className="w-[88px] shrink-0 leading-[14px]">Representation</span><Combo c="w-[200px]">Surface</Combo></div>
          <Section c="mt-[8px]" t="Coloring" />
          <div className="mt-[6px] flex h-[24px] shrink-0 items-center gap-[4px]">
            <Combo c="h-[24px] w-[150px]"><span className="ml-[7px] mr-[9px] h-[4px] w-[4px] rounded-[1px] border border-[#b38a2c] bg-[#f5c02c]" />u</Combo>
            <Combo c="h-[22px] w-[112px]" dis />
          </div>
          <div className="mt-[4px] flex h-[24px] shrink-0 gap-[4px]">
            <Btn c="w-[80px] gap-[2px]"><EditMap s={15} />Edit</Btn>
            <Btn c="w-[28px]"><SepMap s={16} /></Btn><Btn c="w-[28px]"><Range s={17} /></Btn><Btn c="w-[28px]"><Range s={17} t="c" /></Btn><Btn c="w-[28px]"><Range s={17} t="t" /></Btn><Btn c="w-[28px]"><Heart /></Btn><Btn c="w-[28px]" on><ColorBarIcon s={16} /></Btn>
          </div>
          <Section c="mt-[8px]" t="Styling" />
          <div className="mt-[6px] flex h-[22px] shrink-0"><span className="w-[89px] shrink-0 leading-[14px]">Opacity</span><Slider c="w-[100px]" pos={87} /><Input c="ml-[7px] w-[90px]">1</Input></div>
          <Section c="mt-[8px]" t="Lighting" />
          <div className="mt-[6px] flex h-[22px] shrink-0"><span className="w-[89px] shrink-0 leading-[14px]">Specular</span><Slider c="w-[100px]" pos={0} dis /><Input c="ml-[7px] w-[90px]">0</Input></div>
          <Section c="mt-[8px]" t="Ray Tracing" />
          <div className="mt-[6px] flex h-[22px] shrink-0"><span className="w-[88px] shrink-0 leading-[14px]">Scaling Mode</span><Combo c="w-[200px]">All Approximate</Combo></div>
          <div className="mt-[4px] h-px shrink-0 bg-[#9d9d9d]" />
          <div className="mt-[10px] flex h-[22px] shrink-0 items-center"><Check /><span className="ml-[5px] w-[91px] shrink-0 whitespace-nowrap">Data Axes Grid</span><Btn c="h-[22px] w-[194px]">Edit</Btn></div>
          <GroupHead c="mt-[6px]" t="View (Render View)" />
        </div>
        <div className="flex w-[14px] flex-col border-l border-[#b5b5b5] bg-[#e3e3e3]">
          <span className="flex h-[13px] items-center justify-center bg-[#f8f8f8]"><svg width="8" height="4" viewBox="0 0 8 4"><path d="M0 4h8L4 0z" fill="#555" /></svg></span>
          <span className="h-[253px] border-y border-[#b5b5b5] bg-gradient-to-r from-[#fcfcfc] to-[#efefef]" />
          <span className="flex-1" />
          <span className="flex h-[14px] items-center justify-center border-t border-[#b5b5b5] bg-[#f8f8f8]"><Arrow /></span>
        </div>
      </div>
      <div className="ml-[9px] flex h-[14px] w-[261px] shrink-0 border-r border-t border-[#b5b5b5] bg-[#e3e3e3]">
        <span className="flex w-[14px] items-center justify-center border-r border-[#b5b5b5] bg-[#f8f8f8]"><svg width="4" height="8" viewBox="0 0 4 8"><path d="M4 0v8L0 4z" fill="#555" /></svg></span>
        <span className="w-[199px] border-r border-[#b5b5b5] bg-gradient-to-b from-[#fcfcfc] to-[#efefef]" />
        <span className="flex-1" />
        <span className="flex w-[14px] items-center justify-center border-l border-[#b5b5b5] bg-[#f8f8f8]"><svg width="4" height="8" viewBox="0 0 4 8"><path d="M0 0v8l4-4z" fill="#555" /></svg></span>
      </div>
    </div>
  );
}

function Scene() {
  const font = { fontFamily: "Lato, sans-serif", fontSize: 17, fill: "#1a1a1a" };
  const labels: [string, number][] = [["1.5e-01", 829.5], ["0.14", 851.5], ["0.12", 891.5], ["0.1", 931.5], ["0.08", 971.5], ["0.06", 1011.5], ["0.04", 1051.5], ["0.02", 1091.5], ["0.0e+00", 1130.5]];
  return (
    <svg width="1162" height="916" viewBox="304 229 1162 916" className="block tracking-[0px]">
      <path d="M505 688.500l1.500-1.500H1012V435.500l1.500-1.500H1263.500l1.500 1.500V938.500l-1.500 1.500H506.500l-1.500-1.500z" fill="#270d29" />
      <g>
        <path d="M419 1030V975" stroke="#f2ee3c" strokeWidth="1.600" /><path d="M414.500 979l4.500-14 4.500 14z" fill="#dccb18" stroke="#8f8412" strokeWidth=".6" />
        <path d="M419 1029.500h52" stroke="#e22" strokeWidth="1.600" /><path d="M470 1024.500l15 5-15 5z" fill="#c80f0f" />
        <path d="M421 1029l6-2" stroke="#0b6b0b" strokeWidth="3" /><circle cx="419.500" cy="1029.500" r="5.500" fill="#0c6a13" />
        <text x="422" y="978" fontFamily="Lato, sans-serif" fontSize="18" fill="#111">Y</text>
        <text x="473" y="1029" fontFamily="Lato, sans-serif" fontSize="18" fill="#111">X</text>
        <text x="423" y="1028" fontFamily="Lato, sans-serif" fontSize="18" fill="#111">Z</text>
      </g>
      {TURBO.map((c, i) => <rect key={c} x="1349" y={831 + (15 - i) * 18.810} width="16" height="19.200" fill={c} />)}
      {labels.map(([t, y], i) => (
        <g key={t}>
          <path d={`M1361 ${[831.5, 853.5, 893.5, 933.5, 973.5, 1013.5, 1053.5, 1093.5, 1132.5][i]}h12`} stroke="#111" />
          <text x={i === 0 ? 1379.500 : 1378} y={y + 5.500} textLength={[53, 32, 32, 21, 32, 32, 32, 32, 61][i]} {...font}>{t}</text>
        </g>
      ))}
      <text transform="translate(1456 986) rotate(-90)" {...font}>u</text>
    </svg>
  );
}

function CenterView() {
  return (
    <div className="ml-px flex w-[1170px] shrink-0 flex-col">
      <div className="mt-px flex h-[27px] shrink-0 items-end">
        <span className="flex h-[27px] w-[113px] items-center rounded-t-[3px] border border-b-0 border-[#b5b5b5] bg-gradient-to-b from-white to-[#fafafa] pb-px pl-[11px]">
          <svg width="16" height="15" viewBox="0 0 16 15"><rect x=".5" y=".5" width="15" height="14" fill="#fff" stroke="#333" /><rect width="16" height="4" fill="#333" /></svg>
          <span className="ml-[4px] mr-[3px] whitespace-nowrap">Layout #1</span><XBox />
        </span>
        <span className="flex h-[27px] flex-1 items-end border-b border-[#b5b5b5]"><span className="flex h-[25px] w-[31px] items-center justify-center rounded-tr-[3px] border border-b-0 border-l-0 border-[#b5b5b5] bg-[#e7e7e7]">+</span></span>
      </div>
      <div className="flex h-[948px] shrink-0 flex-col border-b border-r border-[#b5b5b5] pl-[2px]">
        <div className="flex h-[27px] shrink-0 items-center justify-between">
          <div className="flex items-center pb-px">
            <VCell><Sm><CamSm /><path d="M2 10l0 7 6-1-2-1.500c2-2 5-1 5 2 2.500-4-3-8-7-5z" fill="#e0262b" /></Sm></VCell>
            <VCell><Sm><CamSm gray /><path d="M16 10v7l-6-1 2-1.500c-2-2-5-1-5 2-2.500-4 3-8 7-5z" fill="#c4c4c4" /></Sm></VCell><VSep />
            <VCell><Sm><CamSm /><path d="M1 4V1h3M14 1h3v3M17 14v3h-3M4 17H1v-3" stroke="#999" /></Sm></VCell><VSep />
            <VCell><span className="font-['Open_Sans'] text-[12px] font-bold text-[#77775c]">2D</span></VCell>
            <VCell><Sm><CamSm /><path d="M9 10l6.500 6.500" stroke="#c9962c" strokeWidth="2.400" /></Sm></VCell><VSep />
            <VCell><Sm><Dash /><PlusG r={4} /></Sm></VCell>
            <VCell><Sm><Dash /><path d="M4 9h10" stroke="#e0262b" strokeWidth="3" /></Sm></VCell>
            <VCell><Sm><Dash /><PlusG x={7} y={6} r={3.500} /><path d="M3 13h8" stroke="#e0262b" strokeWidth="2.600" /><Wand /></Sm></VCell><VSep />
            <VCell><Sm><Dash /><Tri /><Wand /></Sm></VCell>
            <VCell><Sm><Dash /><Pts /><Wand /></Sm></VCell>
            <VCell><Sm><path d="M1.500 16.500v-12h15v12" stroke="#9b9b8c" strokeDasharray="3 2" /><path d="M3 5l6-3.500 7 1V10l-8 2-5-2z" fill="#8fc977" stroke="#5e7d4a" /><path d="M3 5.500l13-1" stroke="#5e7d4a" /><Wand /></Sm></VCell>
            <VCell><Sm><path d="M3 5l4-3.500h9.500V11L13 14H3zM3 5h10v9M13 5l3.500-3.500" stroke="#d88a80" strokeDasharray="2 1.500" /><path d="M3 5h1M13 5h1M3 14h1M16 2h1M8 9h1" stroke="#d33" strokeWidth="2" /><Wand /></Sm></VCell>
            <VCell><Sm><path d="M2 2l5 2 9-2-3 5 3 5-5 4-6-1L2 10z" stroke="#aaa" strokeDasharray="2.500 2" /><path d="M3 9l8-4v8z" fill="#8fc56f" stroke="#6c8a57" strokeWidth=".7" /><Wand /></Sm></VCell>
            <VCell><Sm><path d="M2 2l5 1 9-1-2 5 2 5-5 4-6-1-3-5z" stroke="#aaa" strokeDasharray="2.500 2" />{[[4, 4], [9, 5], [5, 9], [12, 7], [8, 12], [4, 13], [13, 12]].map(([x, y]) => <circle key={`${x}.${y}`} cx={x} cy={y} r="1.500" fill="#a5452f" />)}</Sm></VCell>
            <VCell><Sm><Dash /><circle cx="5" cy="5" r="2.600" fill="#2b86c5" /><circle cx="5" cy="13" r="2.600" fill="#2b86c5" /><circle cx="12" cy="9.500" r="3.200" fill="#8fc56f" /><Wand /></Sm></VCell>
            <VCell><Sm><path d="M2 6.500l5-5h9l-3 5v10H2z" fill="#cfcfcf" stroke="#b0b0b0" /><path d="M13 6.500l3-5v9l-3 5z" fill="#b5b5b5" /><path d="M2 6.500h11v10M6 7v9M2 11h11" stroke="#b0b0b0" /><Wand /></Sm></VCell>
            <VCell><Sm><circle cx="7" cy="8" r="2.800" fill="#d0d0d0" stroke="#b0b0b0" /><path d="M11 12l5 5" stroke="#b5b5b5" strokeWidth="2" /></Sm></VCell>
            <VCell><Sm><Tri x={8} y={8.500} r={5.500} /><Wand /></Sm></VCell>
            <VCell><Sm><Pts /><Wand /></Sm></VCell>
            <VCell><Sm><Tri x={5.500} y={12} r={4.500} /><Q /></Sm></VCell>
            <VCell><Sm><circle cx="5" cy="13.500" r="2.800" fill="#d8402f" /><Q /></Sm></VCell>
            <VCell><Sm><path d="M9 2v14M2 9h14" stroke="#a9a9a9" strokeWidth="4.500" /></Sm></VCell>
            <VCell><Sm><path d="M2 9h14" stroke="#a9a9a9" strokeWidth="4.500" /></Sm></VCell>
            <VCell><Sm><circle cx="9" cy="9" r="7" stroke="#a0a0a0" strokeWidth="2" fill="#f0f0f0" /><path d="M6.500 6.500l5 5M11.500 6.500l-5 5" stroke="#8f8f8f" strokeWidth="1.800" /></Sm></VCell>
          </div>
          <div className="flex items-center gap-px pr-px">
            <span className="mr-[11px] border-b border-black font-bold leading-[14px]">RenderView1</span>
            <Btn c="h-[25px] w-[26px]"><svg width="14" height="14" viewBox="0 0 14 14"><path d="M.500.500h13v13H.500zM7 0v14" fill="#d2d8ee" stroke="#a0a3ab" /></svg></Btn>
            <Btn c="h-[25px] w-[26px]"><svg width="14" height="14" viewBox="0 0 14 14"><path d="M.500.500h13v13H.500zM0 7h14" fill="#d2d8ee" stroke="#a0a3ab" /></svg></Btn>
            <Btn c="h-[25px] w-[26px]"><svg width="18" height="18" viewBox="0 0 18 18"><rect x=".5" y=".5" width="17" height="17" fill="#eee" stroke="#333" /><rect width="18" height="5" fill="#333" /></svg></Btn>
            <Btn c="h-[25px] w-[26px]"><XBox /></Btn>
          </div>
        </div>
        <div className="h-[920px] w-[1166px] border-2 border-[#0000ff] bg-white"><Scene /></div>
      </div>
    </div>
  );
}

const FADED = ["#fefefe", "#efedf3", "#e4e6f8", "#d4e3fd", "#c2eef6", "#aef5e4", "#b0fdd1", "#c6fdab", "#d7fa90", "#ece78a", "#fcd181", "#feae64", "#f58148", "#dd5631", "#b72f1b", "#800e0a"];

function OpacityEditor() {
  return (
    <svg width="347" height="216" viewBox="0 0 347 216" className="block bg-white">
      <defs>
        <clipPath id="ramp"><path d="M8 168L340 7v161z" /></clipPath>
        <linearGradient id="tube" x1="0" y1="0" x2="0" y2="1"><stop offset="0" stopColor="#8d907c" /><stop offset=".3" stopColor="#a9ac9a" /><stop offset=".6" stopColor="#a3a591" /><stop offset=".68" stopColor="#85886f" /><stop offset="1" stopColor="#82856f" /></linearGradient>
        <radialGradient id="ball" cx=".4" cy=".35" r=".7"><stop offset="0" stopColor="#f0efe6" /><stop offset=".6" stopColor="#b9b8a6" /><stop offset="1" stopColor="#5d5c4c" /></radialGradient>
      </defs>
      <rect x="8" y="8" width="3" height="160" fill="#9aa3ad" />
      <g clipPath="url(#ramp)" shapeRendering="crispEdges">
        {FADED.map((a, i) => <rect key={a} x={Math.round(8 + i * 20.750)} y="0" width="22" height="168" fill={a} />)}
        <rect x="337" y="0" width="3" height="168" fill="#756a72" />
      </g>
      <path d="M8 168L340 7" stroke="#44444e" strokeWidth="2" />
      {TURBO.map((c, i) => <rect key={c} x={Math.round(8 + i * 20.750)} y="184" width={i === 15 ? 21 : 22} height="24" fill={c} />)}
      <rect x="8" y="184" width="7" height="24" fill="#726a7c" /><rect x="333" y="184" width="7" height="24" fill="#7a6b78" />
      <rect x="1" y="189" width="345" height="14" rx="7" fill="url(#tube)" />
      <path d="M8 195.500h326" stroke="#b9bbaa" strokeWidth="3" strokeDasharray="2 3" opacity=".35" />
      <circle cx="7.500" cy="168" r="6.500" fill="url(#ball)" /><circle cx="7.500" cy="168" r="3.800" fill="#8d8096" />
      <circle cx="340.500" cy="7.500" r="6.500" fill="url(#ball)" /><circle cx="340.500" cy="7.500" r="4" fill="#c06e6e" />
      <circle cx="340.500" cy="196" r="6" fill="url(#ball)" /><circle cx="340.500" cy="196" r="4" fill="#8a0f0a" />
    </svg>
  );
}

function RightDock() {
  return (
    <div className="flex w-[394px] shrink-0 flex-col">
      <DockTitle t="Color Map Editor" c="pl-[10px]" />
      <div className="ml-[15px] mt-[9px] flex w-[372px] flex-col">
        <div className="flex h-[23px] gap-[2px]">
          <Input c="h-[22px] w-[294px] text-[#8c8c8c]">Search ... (use Esc to clear text)</Input>
          <Btn c="w-[24px]"><Gear /></Btn><Btn c="w-[24px]" on><ColorBarIcon s={16} /></Btn><Btn c="w-[24px]"><ColorBarE /></Btn>
        </div>
        <div className="mt-[6px] h-[14px] leading-[14px]">Array Name: u</div>
        <div className="mt-[5px] flex h-[29px] items-center"><span className="w-[106px] shrink-0 whitespace-nowrap leading-[14px]">Automatic Rescale<br />Range Mode</span><Combo c="h-[22px] w-[266px]">Never</Combo></div>
        <CheckRow c="mt-[7px]" t="Interpret Values As Categories" />
        <CheckRow c="mt-[10px]" t="Rescale On Visibility Change" />
        <Section c="mt-[11px]" t="Mapping Data" />
        <Combo c="mt-[6px] h-[22px] w-[372px]">Select a color map from default presets</Combo>
        <div className="mt-[6px] flex h-[216px] gap-px">
          <OpacityEditor />
          <div className="flex flex-col justify-between">
            <Btn c="h-[23px] w-[24px]"><Range s={17} /></Btn>
            <Btn c="h-[23px] w-[24px]"><Range s={17} t="c" /></Btn>
            <Btn c="h-[23px] w-[24px]"><Range s={17} t="t" /></Btn>
            <Btn c="h-[23px] w-[24px]"><Range s={17} t="eye" /></Btn>
            <Btn c="h-[23px] w-[24px]"><svg width="16" height="16" viewBox="0 0 16 16"><path d="M0 0h16L0 16z" fill="#000" /><circle cx="8.500" cy="8" r="7" fill="#fff" stroke="#888" strokeWidth=".7" /></svg></Btn>
            <Btn c="h-[23px] w-[24px]"><Heart /></Btn>
            <Btn c="h-[23px] w-[24px]"><FolderDown s={17} /></Btn>
            <Btn c="h-[23px] w-[24px]" dis><Ic s={17}><path d="M2 1v22h21" stroke="#b5b5b5" /><path d="M5 17h4v5H5zM9 11h5v11H9zM14 15h4v7h-4z" fill="#c2c2c2" /><circle cx="16" cy="7" r="6" fill="#a9a9a9" /><path d="M13 9l5-5" stroke="#e5e5e5" strokeWidth="2" /></Ic></Btn>
            <Btn c="h-[23px] w-[24px]"><Gear /></Btn>
          </div>
        </div>
        <div className="mt-[6px] flex h-[22px] items-center"><span className="w-[35px]">Data:</span><Input c="h-[22px] w-[337px]" dis /></div>
        <CheckRow c="mt-[9px]" t="Enable Freehand Drawing Of Opacity Transfer Function" />
        <CheckRow c="mt-[12px]" t="Use Log Scale When Mapping Data To Colors" />
        <CheckRow c="mt-[12px]" t="Enable Opacity Mapping For Surfaces" />
        <CheckRow c="mt-[12px]" t="Use Log Scale When Mapping Data To Opacity" dis />
        <Section c="mt-[9px]" t="Data Histogram" />
        <CheckRow c="mt-[11px]" t="Display Data Histogram" />
        <CheckRow c="mt-[12px]" t="Automatically recompute data histogram" dis />
        <div className="mt-[9px] flex h-[22px] items-center"><span className="w-[94px] shrink-0 whitespace-nowrap">Number of Bins:</span><Slider c="w-[135px]" pos={4} dis /><Input c="ml-[7px] h-[22px] w-[136px]" dis>10</Input></div>
        <Section c="mt-[8px]" t="Color Mapping Parameters" />
        <div className="mt-[6px] flex h-[22px]"><span className="w-[106px] leading-[14px]">Color Space</span><Combo c="w-[266px]">RGB</Combo></div>
        <span className="mt-[4px] flex h-[23px] items-center gap-[3px] rounded-[3px] border border-[#adadad] bg-gradient-to-b from-[#fdfdfd] to-[#efefef] pl-[2px]"><span className="h-[16px] w-[16px] rounded-full border border-[#55551c] bg-[#ffff00]" />Nan Color</span>
        <div className="mt-[4px] flex h-[22px]"><span className="w-[107px] leading-[14px]">Nan Opacity</span><Slider c="w-[128px]" pos={115} /><Input c="ml-[7px] w-[130px]">1</Input></div>
        <Section c="mt-[8px]" t="Color Discretization" />
        <CheckRow c="mt-[9px]" t="Discretize" on />
        <div className="mt-[6px] flex h-[29px] items-center"><span className="w-[107px] shrink-0 whitespace-nowrap pb-px leading-[14px]">Number Of Table<br />Values</span><Slider c="w-[128px]" pos={2} /><Input c="ml-[7px] h-[22px] w-[130px]">16</Input></div>
        <div className="mt-[6px] flex h-[24px] gap-[2px]">
          <Btn c="w-[28px]"><Refresh s={17} /></Btn>
          <Btn c="w-[28px]"><Ic s={18}><path d="M6 14V5h4l1 1.500h7V14z" fill="#f3d88c" stroke="#b39b52" /><path d="M6 14l3-6h11l-3 6z" fill="#f7e3a0" stroke="#b39b52" /><path d="M14 0l4 4h-2v3h-4V4h-2z" fill="#7fbf62" /><path d="M1.500 15v8M1.500 19h21M22.500 15v8M8 17v4M15 17v4" stroke="#83836f" /></Ic></Btn>
          <Btn c="w-[28px]"><FolderDown s={17} /></Btn>
          <span className="flex-1" />
          <Btn c="w-[105px] gap-[2px] whitespace-nowrap" dis><ApplyIcon s={14} gray />Render Views</Btn>
          <Btn c="w-[28px]" on><ApplyIcon s={15} /></Btn>
        </div>
      </div>
    </div>
  );
}

export default function App() {
  const bar = "flex shrink-0 items-center border-b border-[#b5b5b5] bg-gradient-to-b from-[#f8f8f8] to-[#eeeeee]";
  return (
    <div className="relative flex h-[1173px] w-[1866px] flex-col overflow-hidden bg-[#efefef] font-['Liberation_Sans',Arial,sans-serif] text-[12px] tracking-[0.1px] text-[#1a1a1a]">
      <header className="flex h-[37px] shrink-0 items-center border-t border-[#3a3a3a] bg-[#222222] pb-[2px]">
        <span className="w-[1769px] pl-[99px] text-center font-['Open_Sans',sans-serif] text-[14px] font-bold tracking-[0px] text-white">ParaView 5.10.1</span>
        <span className="flex gap-[12px]">
          {[0, 1, 2].map(i => (
            <svg key={i} width="22" height="22" viewBox="0 0 22 22" fill="none"><circle cx="11" cy="11" r="11" fill="#3a3a3a" />
              {i === 0 && <path d="M7 14.500h8" stroke="#eee" />}
              {i === 1 && <><rect x="7.500" y="8.500" width="6" height="6" stroke="#eee" /><path d="M9.500 6.500h6v6" stroke="#eee" /></>}
              {i === 2 && <path d="M7.500 7.500l7 7M14.500 7.500l-7 7" stroke="#eee" strokeWidth="1.400" />}
            </svg>
          ))}
        </span>
      </header>
      <div className="flex min-h-0 flex-1 flex-col border-l-2 border-[#161616]">
        <nav className="flex h-[19px] shrink-0 items-center border-b border-[#cfcfcf] pl-[10px]">
          {MENU.map(([a, b, c, w]) => <span key={a + b + c} className={`shrink-0 whitespace-nowrap leading-[15px] ${w}`}>{a}<span className="border-b border-black">{b}</span>{c}</span>)}
        </nav>
        <div className={`${bar} h-[39px]`}>
          <Handle c="ml-[5px] mr-[3px]" />
          <Cell><FolderUp /></Cell><Cell><FolderDown /></Cell><Cell><SaveData /></Cell><Cell><SaveShot /></Cell><Cell><CatalystLogo /></Cell><Sep />
          <Cell><Servers /></Cell><Cell><Servers off /></Cell><Cell><History /></Cell><Sep />
          <Cell><Undo /></Cell><Cell><Redo /></Cell><Sep />
          <Cell><ApplyIcon /></Cell><Cell><SelLut /></Cell><Cell><Palette /></Cell>
          <Handle c="ml-[9px] mr-[3px]" />
          <Cell><First /></Cell><Cell><Prev /></Cell>
          <span className="flex h-[31px] w-[32px] shrink-0 items-center justify-center rounded-[3px] border border-[#b5b5b5] bg-gradient-to-b from-white to-[#f4f4f4]"><Play /></span>
          <Cell><Next /></Cell><Cell><Last /></Cell><Cell><Loop /></Cell>
          <Handle c="ml-[9px] mr-[3px]" />
          <span className="w-[32px] shrink-0">Time:</span>
          <Combo c="h-[22px] w-[51px]">0</Combo>
          <span className="ml-[2px] flex h-[21px] w-[52px] shrink-0 overflow-hidden rounded-[3px] border border-[#ababab] bg-white">
            <span className="flex flex-1 items-center pl-[4px]">0</span>
            <span className="flex w-[14px] flex-col items-center justify-center gap-[4px] border-l border-[#b9b9b9] bg-[#f4f4f4]"><svg width="7" height="4" viewBox="0 0 8 4"><path d="M0 4h8L4 0z" fill="#555" /></svg><svg width="7" height="4" viewBox="0 0 8 4"><path d="M0 0h8L4 4z" fill="#aaa" /></svg></span>
          </span>
          <span className="ml-[2px] w-[77px] shrink-0 whitespace-nowrap">max is 100</span>
          <Cell><CamWrench /></Cell><Cell><CamPlus /></Cell>
        </div>
        <div className={`${bar} h-[39px]`}>
          <Handle c="ml-[5px] mr-[3px]" />
          <Pressed><ColorBarIcon /></Pressed><Cell><EditMap /></Cell><Cell><SepMap /></Cell><Cell><Range /></Cell><Cell><Range t="c" /></Cell><Cell><Range t="t" /></Cell><Cell><Range t="eye" /></Cell>
          <Combo c="h-[24px] w-[150px]"><span className="ml-[7px] mr-[9px] h-[4px] w-[4px] rounded-[1px] border border-[#b38a2c] bg-[#f5c02c]" />u</Combo>
          <Combo c="ml-[4px] h-[22px] w-[72px]" dis />
          <Handle c="ml-[9px] mr-[3px]" />
          <Combo c="h-[22px] w-[150px]">Surface</Combo>
          <Handle c="ml-[19px] mr-[3px]" />
          <Cell><ResetCam /></Cell><Cell><ZoomData /></Cell><Cell><ResetClosest /></Cell><Cell><ZoomClosest /></Cell><Cell><ZoomBox /></Cell>
          <Cell><AxisIc t="+X" up={G} side="#f3b91d" box="#e03b2a" /></Cell>
          <Cell><AxisIc t="-X" flip up={G} side="#f3b91d" box="#e03b2a" /></Cell>
          <Cell><AxisIc t="+Y" flip up={G} side="#e03b2a" box="#f3b91d" /></Cell>
          <Cell><AxisIc t="-Y" up={G} side="#e03b2a" box="#f3b91d" /></Cell>
          <Cell><AxisIc t="+Z" up="#f3b91d" side="#e03b2a" box={G} /></Cell>
          <Cell><AxisIc t="-Z" flip up="#f3b91d" side="#e03b2a" box={G} /></Cell>
          <Cell><Rot t="+90" /></Cell><Cell><Rot t="-90" flip /></Cell>
          <Handle c="ml-[9px] mr-[3px]" />
          <Pressed><AxesVis /></Pressed><Cell><Center k={0} /></Cell><Cell><Center k={1} /></Cell><Cell><Center k={2} /></Cell>
          <Handle c="ml-[9px]" />
        </div>
        <div className={`${bar} h-[38px]`}>
          <Handle c="ml-[5px] mr-[2px]" />
          <Cell33><Calc /></Cell33><Cell33><Contour /></Cell33><Cell33><Clip /></Cell33><Cell33><Slice /></Cell33><Cell33><Thresh /></Cell33><Cell33><Extract /></Cell33><Cell33><Glyph /></Cell33><Cell33><Stream /></Cell33><Cell33><Warp /></Cell33><Cell33><Group /></Cell33><Cell33><ExGroup /></Cell33>
          <Handle c="ml-[9px] mr-[2px]" />
          <Cell33><BoxPlot /></Cell33><Cell33><ExSel /></Cell33><Cell33><Histo /></Cell33><Cell33><TimeA /></Cell33><Cell33><OverLine /></Cell33><Cell33><TimeA k /></Cell33><Cell33><Probe /></Cell33><Cell33><Prog /></Cell33>
          <Handle c="ml-[9px] mr-[2px]" />
          <Cell33><Ruler /></Cell33>
        </div>
        <main className="flex h-[980px] shrink-0">
          <LeftDock />
          <CenterView />
          <RightDock />
        </main>
        <footer className="flex shrink-0 gap-[3px] pl-[933px]">
          <Btn c="h-[19px] w-[20px]"><svg width="8" height="8" viewBox="0 0 8 8"><path d="M1 1l6 6M7 1L1 7" stroke="#888" strokeWidth="2.200" /></svg></Btn>
          <span className="h-[20px] w-[908px] border border-b-white border-l-[#9d9d9d] border-r-white border-t-[#9d9d9d]" />
        </footer>
      </div>
      <div className="absolute left-[463px] top-[54px] h-[44px] w-[423px] border-[5px] border-[#ff0000]" />
      <div className="absolute left-[550px] top-[97px] flex h-[19px] w-[32px] items-center justify-center border border-black bg-[#ffffdc] tracking-[0.4px]">Play</div>
      <svg width="14" height="20" viewBox="0 0 14 20" className="absolute left-[546px] top-[79px]"><path d="M1.500 1.500v12l3-2.500 2.500 5 2-1-2.500-4.500 4.500-.500z" fill="#1f1f1f" stroke="#ddd" strokeWidth=".6" /></svg>
    </div>
  );
}
